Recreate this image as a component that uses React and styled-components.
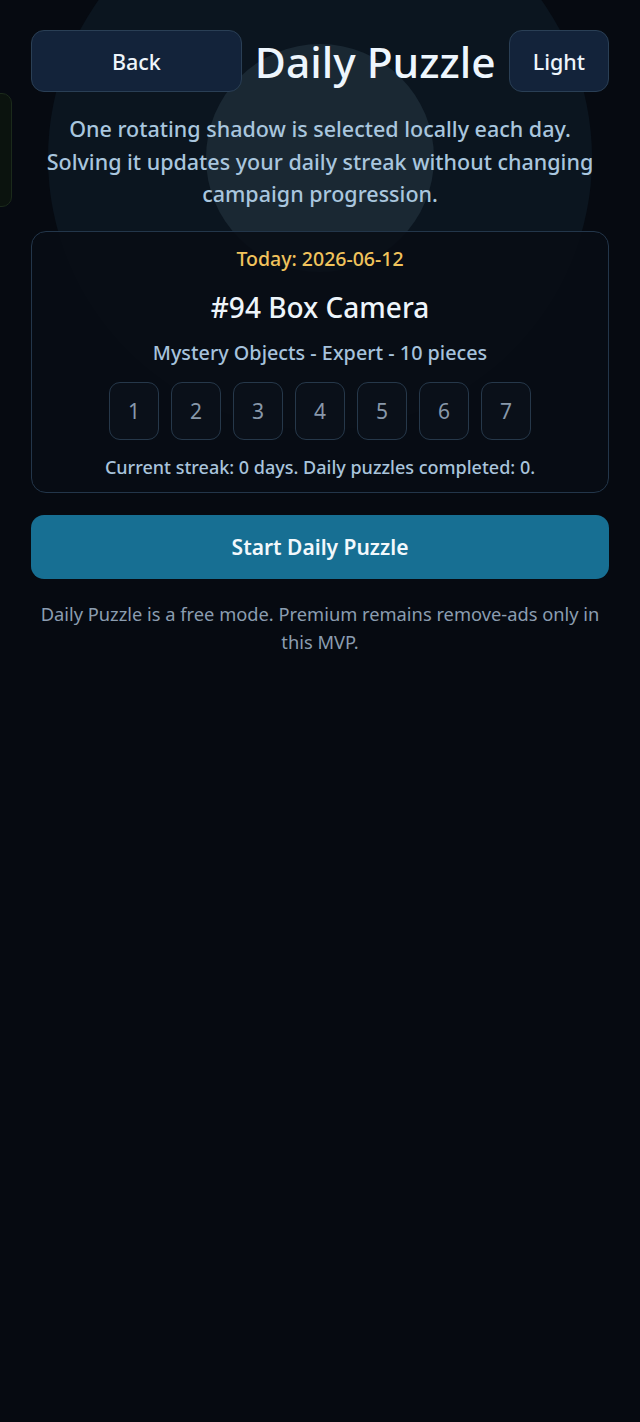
import React from 'react';
import styled, { createGlobalStyle } from 'styled-components';

const GlobalStyle = createGlobalStyle`
  html, body {
    margin: 0;
    padding: 0;
    background: #060a11;
  }
  body {
    font-family: 'Noto Sans', 'Open Sans', sans-serif;
    color: #eef5fb;
  }
`;

const Screen = styled.div`
  position: relative;
  width: 640px;
  min-height: 1422px;
  overflow: hidden;
  background: #060a11;
`;

const Glow = styled.div`
  position: absolute;
  left: ${p => p.cx - p.r}px;
  top: ${p => p.cy - p.r}px;
  width: ${p => p.r * 2}px;
  height: ${p => p.r * 2}px;
  border-radius: 50%;
  background: ${p => p.color};
`;

const EdgeCard = styled.div`
  position: absolute;
  left: -20px;
  top: 93px;
  width: 30px;
  height: 112px;
  border-radius: 10px;
  border: 1px solid #1b2a1b;
  background: #0b130e;
`;

const Content = styled.div`
  position: relative;
  padding: 30px 31px;
  display: flex;
  flex-direction: column;
`;

const Header = styled.div`
  display: flex;
  align-items: center;
  gap: 13px;
`;

const NavButton = styled.button`
  flex: ${p => (p.grow ? 1 : '0 0 auto')};
  height: 62px;
  padding: 0 23px;
  border-radius: 13px;
  border: 1px solid #2a3f55;
  background: #13233a;
  color: #eef5fb;
  font-family: inherit;
  font-size: 21.5px;
  font-weight: 500;
`;

const Title = styled.h1`
  margin: 0;
  font-size: 42.5px;
  font-weight: 500;
  color: #eef6fd;
  white-space: nowrap;
`;

const Lead = styled.p`
  margin: 21px 0 0;
  padding: 0 14px;
  text-align: center;
  font-size: 21.5px;
  line-height: 32.5px;
  font-weight: 500;
  color: #a9c6de;
`;

const Card = styled.section`
  margin-top: 20px;
  border: 1px solid #23364a;
  border-radius: 15px;
  background: rgba(8, 13, 21, 0.88);
  padding: 14px 16px 13px;
  display: flex;
  flex-direction: column;
  align-items: center;
`;

const DateLine = styled.div`
  font-size: 19.5px;
  font-weight: 500;
  color: #f1c35c;
  line-height: 26px;
`;

const PuzzleName = styled.h2`
  margin: 18px 0 0;
  font-size: 28px;
  font-weight: 500;
  color: #eef5fb;
  line-height: 34px;
`;

const Meta = styled.div`
  margin-top: 16px;
  font-size: 19.8px;
  font-weight: 500;
  color: #a6c2dc;
  line-height: 26px;
`;

const Tiles = styled.div`
  margin-top: 16px;
  display: flex;
  gap: 12px;
`;

const Tile = styled.div`
  width: 50px;
  height: 58px;
  box-sizing: border-box;
  border: 1px solid #26384a;
  border-radius: 11px;
  background: #0a1019;
  display: flex;
  align-items: center;
  justify-content: center;
  font-size: 21px;
  color: #8898aa;
`;

const Streak = styled.div`
  margin-top: 15px;
  font-size: 18px;
  font-weight: 500;
  color: #a9c4dc;
  line-height: 24px;
`;

const StartButton = styled.button`
  margin-top: 22px;
  height: 64px;
  border: 0;
  border-radius: 13px;
  background: #176f93;
  color: #f2f8fc;
  font-family: inherit;
  font-size: 21px;
  font-weight: 600;
`;

const Note = styled.p`
  margin: 21px 0 0;
  text-align: center;
  font-size: 18.3px;
  line-height: 28px;
  color: #8b9db0;
`;

const days = [1, 2, 3, 4, 5, 6, 7];

export default function App() {
  return (
    <Screen>
      <GlobalStyle />
      <Glow cx={320} cy={158} r={272} color="#0b151f" />
      <Glow cx={320} cy={158} r={114} color="#1a2833" />
      <EdgeCard />
      <Content>
        <Header>
          <NavButton grow>Back</NavButton>
          <Title>Daily Puzzle</Title>
          <NavButton>Light</NavButton>
        </Header>
        <Lead>
          One rotating shadow is selected locally each day. Solving it updates your daily
          streak without changing campaign progression.
        </Lead>
        <Card>
          <DateLine>Today: 2026-06-12</DateLine>
          <PuzzleName>#94 Box Camera</PuzzleName>
          <Meta>Mystery Objects - Expert - 10 pieces</Meta>
          <Tiles>
            {days.map(d => (
              <Tile key={d}>{d}</Tile>
            ))}
          </Tiles>
          <Streak>Current streak: 0 days. Daily puzzles completed: 0.</Streak>
        </Card>
        <StartButton>Start Daily Puzzle</StartButton>
        <Note>Daily Puzzle is a free mode. Premium remains remove-ads only in this MVP.</Note>
      </Content>
    </Screen>
  );
}
